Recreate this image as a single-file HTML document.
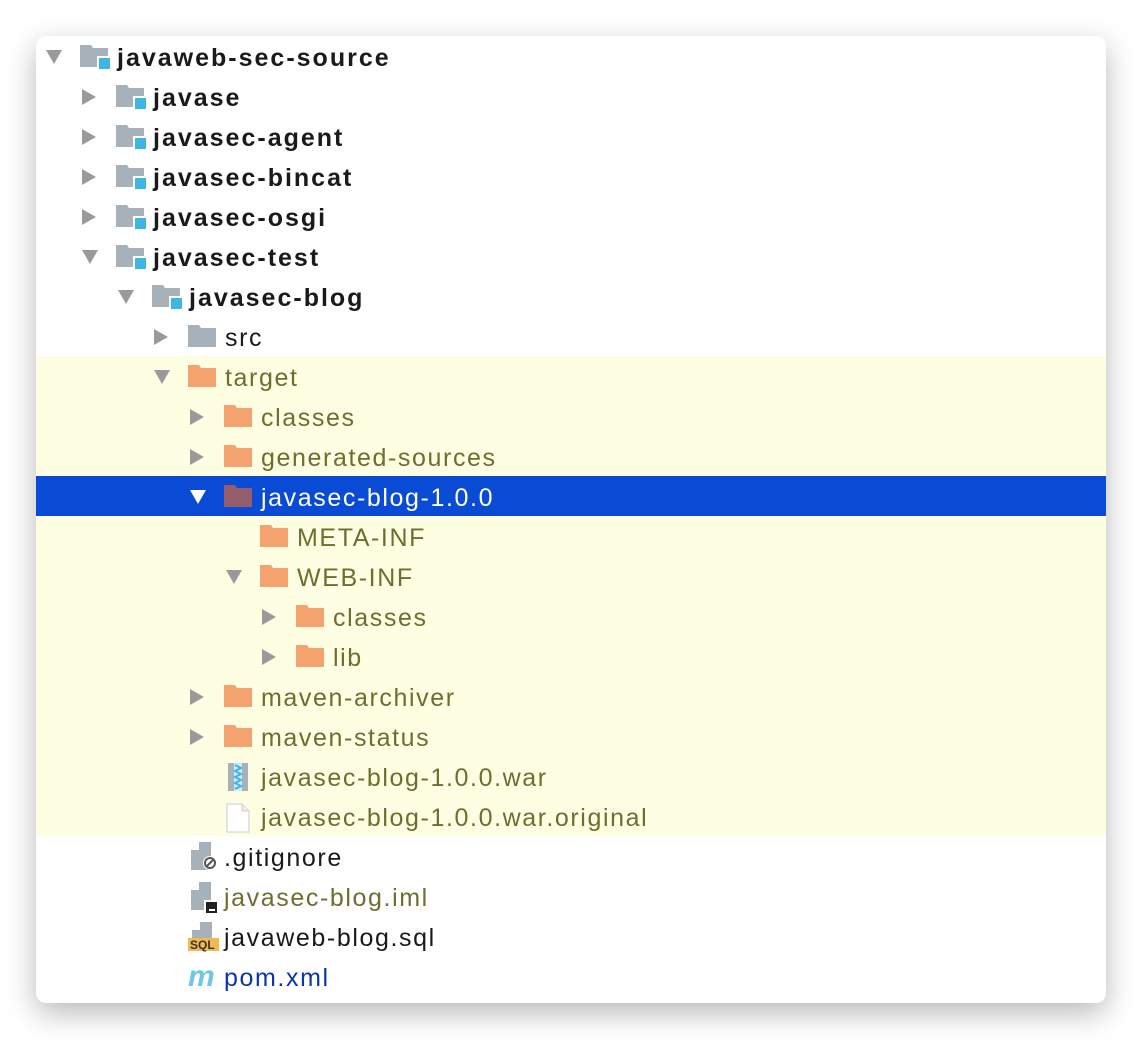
<!DOCTYPE html>
<html><head><meta charset="utf-8"><style>
body{margin:0;width:1142px;height:1040px;background:#fff;font-family:"Liberation Sans",sans-serif;overflow:hidden;position:relative}
.panel{position:absolute;left:36px;top:36px;width:1070px;height:967px;background:#fff;border-radius:10px;box-shadow:0 10px 30px rgba(0,0,0,.28);overflow:hidden}
.hl{position:absolute;left:0;width:1070px;background:#fefee2}
.sel{position:absolute;left:0;width:1070px;top:440px;height:40px;background:#0a4bd6}
.r{position:absolute;height:40px;line-height:42px;font-size:25px;letter-spacing:1.6px;white-space:nowrap;color:#1a1a1a}
.b{font-weight:bold;letter-spacing:2px}
.o{color:#6e6e2f}
.w{color:#fff}
.bl{color:#0a36a8}
.ar{position:absolute;width:0;height:0}
.ex{border-left:8px solid transparent;border-right:8px solid transparent;border-top:14px solid #9a9a9a}
.co{border-top:8px solid transparent;border-bottom:8px solid transparent;border-left:14px solid #9a9a9a}
svg{position:absolute}
</style></head><body>
<div class="panel">
<div class="hl" style="top:320px;height:480px"></div>
<div class="sel"></div>
<svg width="0" height="0"><defs>
<g id="fg"><path d="M0 0h11l2 3h15v19H0z" fill="#a7b1b9"/></g>
<g id="fo"><path d="M0 0h11l2 3h15v19H0z" fill="#f4a26e"/></g>
<g id="fs"><path d="M0 0h11l2 3h15v19H0z" fill="#935d6c"/></g>
<g id="fm"><path d="M0 0h11l2 3h15v19H0z" fill="#a7b1b9"/><rect x="17" y="11" width="14" height="14" fill="#fff"/><rect x="19" y="13" width="11" height="11" fill="#3fb6e2"/></g>
</defs></svg>
</div>
<div class="ar ex" style="left:46px;top:50px"></div>
<svg style="left:80px;top:45px" width="32" height="26"><use href="#fm"/></svg>
<div class="r b" style="left:117px;top:37px">javaweb-sec-source</div>

<div class="ar co" style="left:82px;top:89px"></div>
<svg style="left:116px;top:85px" width="32" height="26"><use href="#fm"/></svg>
<div class="r b" style="left:153px;top:77px">javase</div>

<div class="ar co" style="left:82px;top:129px"></div>
<svg style="left:116px;top:125px" width="32" height="26"><use href="#fm"/></svg>
<div class="r b" style="left:153px;top:117px">javasec-agent</div>

<div class="ar co" style="left:82px;top:169px"></div>
<svg style="left:116px;top:165px" width="32" height="26"><use href="#fm"/></svg>
<div class="r b" style="left:153px;top:157px">javasec-bincat</div>

<div class="ar co" style="left:82px;top:209px"></div>
<svg style="left:116px;top:205px" width="32" height="26"><use href="#fm"/></svg>
<div class="r b" style="left:153px;top:197px">javasec-osgi</div>

<div class="ar ex" style="left:82px;top:250px"></div>
<svg style="left:116px;top:245px" width="32" height="26"><use href="#fm"/></svg>
<div class="r b" style="left:153px;top:237px">javasec-test</div>

<div class="ar ex" style="left:118px;top:290px"></div>
<svg style="left:152px;top:285px" width="32" height="26"><use href="#fm"/></svg>
<div class="r b" style="left:189px;top:277px">javasec-blog</div>

<div class="ar co" style="left:154px;top:329px"></div>
<svg style="left:188px;top:325px" width="30" height="24"><use href="#fg"/></svg>
<div class="r" style="left:225px;top:317px">src</div>

<div class="ar ex" style="left:154px;top:370px"></div>
<svg style="left:188px;top:365px" width="30" height="24"><use href="#fo"/></svg>
<div class="r o" style="left:225px;top:357px">target</div>

<div class="ar co" style="left:190px;top:409px"></div>
<svg style="left:224px;top:405px" width="30" height="24"><use href="#fo"/></svg>
<div class="r o" style="left:261px;top:397px">classes</div>

<div class="ar co" style="left:190px;top:449px"></div>
<svg style="left:224px;top:445px" width="30" height="24"><use href="#fo"/></svg>
<div class="r o" style="left:261px;top:437px">generated-sources</div>

<div class="ar ex" style="left:190px;top:490px;border-top-color:#fff"></div>
<svg style="left:224px;top:485px" width="30" height="24"><use href="#fs"/></svg>
<div class="r w" style="left:261px;top:477px">javasec-blog-1.0.0</div>

<svg style="left:260px;top:525px" width="30" height="24"><use href="#fo"/></svg>
<div class="r o" style="left:297px;top:517px">META-INF</div>

<div class="ar ex" style="left:226px;top:570px"></div>
<svg style="left:260px;top:565px" width="30" height="24"><use href="#fo"/></svg>
<div class="r o" style="left:297px;top:557px">WEB-INF</div>

<div class="ar co" style="left:262px;top:609px"></div>
<svg style="left:296px;top:605px" width="30" height="24"><use href="#fo"/></svg>
<div class="r o" style="left:333px;top:597px">classes</div>

<div class="ar co" style="left:262px;top:649px"></div>
<svg style="left:296px;top:645px" width="30" height="24"><use href="#fo"/></svg>
<div class="r o" style="left:333px;top:637px">lib</div>

<div class="ar co" style="left:190px;top:689px"></div>
<svg style="left:224px;top:685px" width="30" height="24"><use href="#fo"/></svg>
<div class="r o" style="left:261px;top:677px">maven-archiver</div>

<div class="ar co" style="left:190px;top:729px"></div>
<svg style="left:224px;top:725px" width="30" height="24"><use href="#fo"/></svg>
<div class="r o" style="left:261px;top:717px">maven-status</div>

<svg style="left:227px;top:763px" width="22" height="28"><rect x="1" y="0" width="20" height="28" fill="#a7b1b9"/><rect x="7" y="0" width="8" height="28" fill="#cfe9f5"/><path d="M8 2l6 3-6 3 6 3-6 3 6 3-6 3 6 3-6 3" stroke="#3fb6e2" stroke-width="2" fill="none"/></svg>
<div class="r o" style="left:261px;top:757px">javasec-blog-1.0.0.war</div>

<svg style="left:226px;top:803px" width="24" height="30"><path d="M1 1h15l7 7v21H1z" fill="#fff" stroke="#ccc"/><path d="M16 1v7h7" fill="#eee" stroke="#ccc"/></svg>
<div class="r o" style="left:261px;top:797px">javasec-blog-1.0.0.war.original</div>

<svg style="left:191px;top:842px" width="28" height="30"><path d="M0 8l8-8h12v28H0z" fill="#a7b1b9"/><path d="M0 8h8V0" fill="#fff"/><circle cx="19" cy="21" r="7" fill="#fff"/><circle cx="19" cy="21" r="5" fill="none" stroke="#555" stroke-width="2"/><path d="M15 25l8-8" stroke="#555" stroke-width="2"/></svg>
<div class="r" style="left:224px;top:837px">.gitignore</div>

<svg style="left:191px;top:882px" width="28" height="32"><path d="M0 8l8-8h12v28H0z" fill="#a7b1b9"/><path d="M0 8h8V0" fill="#fff"/><rect x="13" y="18" width="14" height="13" fill="#fff"/><rect x="15" y="20" width="11" height="11" fill="#222"/><rect x="18" y="27" width="6" height="2" fill="#fff"/></svg>
<div class="r o" style="left:224px;top:877px">javasec-blog.iml</div>

<svg style="left:188px;top:922px" width="34" height="30"><path d="M4 8l8-8h12v20H4z" fill="#a7b1b9"/><path d="M4 8h8V0" fill="#fff"/><rect x="0" y="16" width="31" height="13" fill="#f3b84f"/><text x="2" y="27" font-family="Liberation Sans" font-weight="bold" font-size="12" fill="#333">SQL</text></svg>
<div class="r" style="left:224px;top:917px">javaweb-blog.sql</div>

<div class="r b" style="left:188px;top:956px;font-style:italic;color:#6ec6ea;font-size:30px;letter-spacing:0">m</div>
<div class="r bl" style="left:224px;top:957px">pom.xml</div>
</body></html>
